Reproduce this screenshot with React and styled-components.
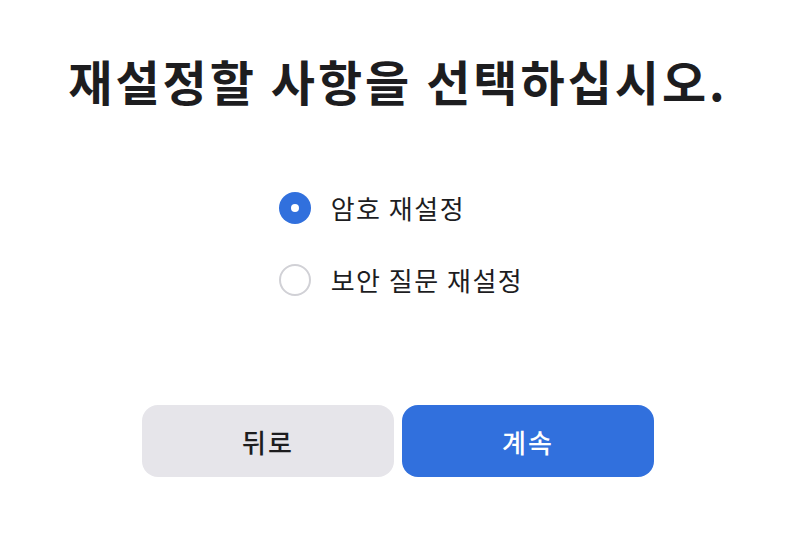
import { useState } from 'react';
import styled, { createGlobalStyle } from 'styled-components';

const GlobalStyle = createGlobalStyle`
    html, body {
        margin: 0;
        background: #ffffff;
        font-family: "Noto Sans CJK KR", "Noto Sans", sans-serif;
        color: #1d1d1f;
    }
`;

const Page = styled.div`
    width: 796px;
    height: 534px;
    display: flex;
    flex-direction: column;
    align-items: center;
    box-sizing: border-box;
    padding-top: 48px;
`;

const Title = styled.h1`
    margin: 0;
    font-size: 48px;
    font-weight: 700;
    line-height: 64px;
    letter-spacing: 3px;
    color: #1d1d1f;
`;

const Options = styled.div`
    margin-top: 80px;
    display: flex;
    flex-direction: column;
    gap: 40px;
    margin-left: 6px;
`;

const Option = styled.label`
    display: flex;
    align-items: center;
    gap: 20px;
    font-size: 26px;
    line-height: 32px;
    letter-spacing: 1.5px;
    cursor: pointer;
`;

const Radio = styled.span`
    width: 32px;
    height: 32px;
    box-sizing: border-box;
    border-radius: 50%;
    display: flex;
    align-items: center;
    justify-content: center;
    background: ${p => (p.$checked ? '#3170dd' : '#ffffff')};
    border: ${p => (p.$checked ? 'none' : '2px solid #d1d1d6')};

    &::after {
        content: '';
        display: ${p => (p.$checked ? 'block' : 'none')};
        width: 8px;
        height: 8px;
        border-radius: 50%;
        background: #ffffff;
    }
`;

const Buttons = styled.div`
    margin-top: 109px;
    display: flex;
    gap: 8px;
`;

const Button = styled.button`
    width: 252px;
    height: 72px;
    border: none;
    border-radius: 16px;
    font-family: inherit;
    font-size: 26px;
    font-weight: 500;
    letter-spacing: 2px;
    background: ${p => (p.$primary ? '#3170dd' : '#e6e5ea')};
    color: ${p => (p.$primary ? '#ffffff' : '#1d1d1f')};
    cursor: pointer;
`;

const choices = ['암호 재설정', '보안 질문 재설정'];

function App() {
    const [selected, setSelected] = useState(0);

    return (
        <Page>
            <GlobalStyle />
            <Title>재설정할 사항을 선택하십시오.</Title>
            <Options>
                {choices.map((c, i) => (
                    <Option key={c} onClick={() => setSelected(i)}>
                        <Radio $checked={selected === i} />
                        {c}
                    </Option>
                ))}
            </Options>
            <Buttons>
                <Button>뒤로</Button>
                <Button $primary>계속</Button>
            </Buttons>
        </Page>
    );
}

export default App;
